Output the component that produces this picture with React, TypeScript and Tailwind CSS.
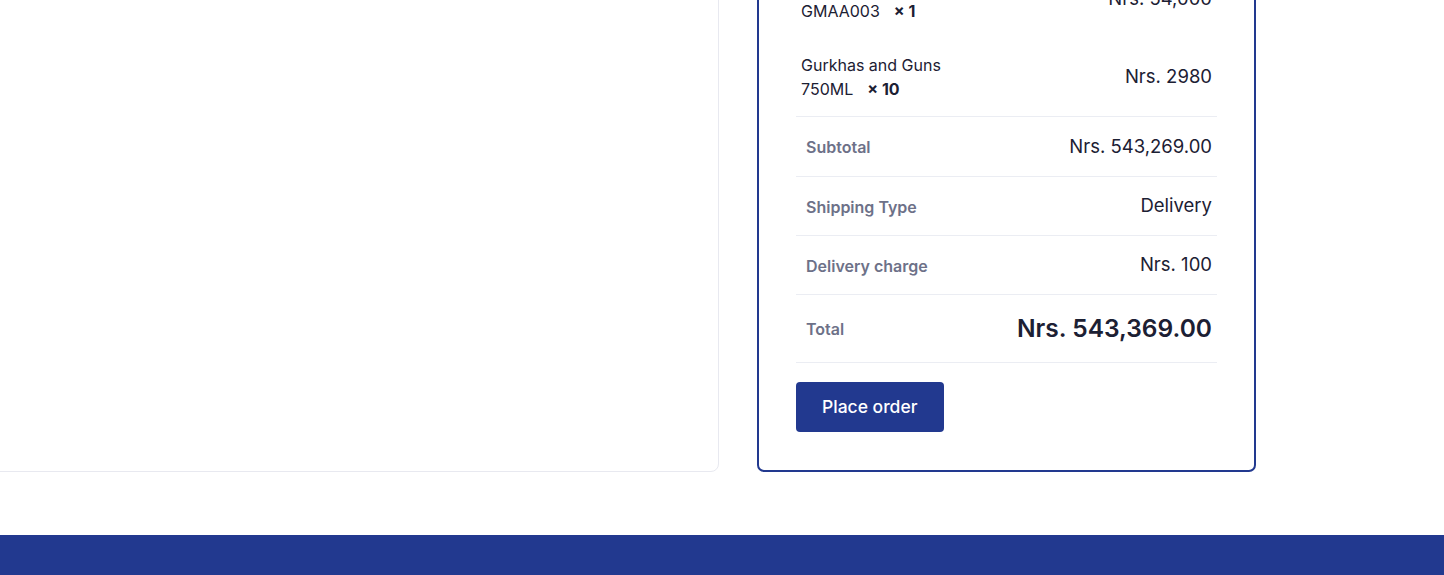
import React from "react";

interface CartItem {
  name: string;
  code: string;
  qty: number;
  price: string;
}

const items: CartItem[] = [
  { name: "Glenmorangie Malt", code: "GMAA003", qty: 1, price: "Nrs. 54,000" },
  { name: "Gurkhas and Guns", code: "750ML", qty: 10, price: "Nrs. 2980" },
];

const font = { fontFamily: "Inter, 'Noto Sans', sans-serif" };

const SummaryRow = ({ label, value, height }: { label: string; value: string; height: string }) => (
  <div className={`flex items-center justify-between border-b border-[#ebedf3] pl-[10px] pr-[5px] ${height}`}>
    <span className="pt-[1px] text-[16px] font-semibold text-[#6d7188]">{label}</span>
    <span className="text-[18.5px] text-[#1c2033]">{value}</span>
  </div>
);

export default function App() {
  return (
    <div className="min-h-screen overflow-hidden bg-white" style={font}>
      <div className="-mt-[79px] flex gap-[38px]">
        {/* left panel (shipping details, scrolled out of view) */}
        <div className="-ml-[40px] w-[759px] rounded-lg border border-[#e8e9f0] bg-white" />

        {/* order summary */}
        <div className="w-[499px] rounded-[7px] border-2 border-[#22398f] px-[37px] pt-[37px] pb-[38px]">
          <div className="border-b border-[#ebedf3]">
            {items.map((item) => (
              <div key={item.code} className="flex items-center justify-between py-[15px] pl-[5px] pr-[5px]">
                <div className="text-[16px] leading-[24px] text-[#1c2033]">
                  <div>{item.name}</div>
                  <div>
                    {item.code}
                    <span className="ml-[14px] font-bold">× {item.qty}</span>
                  </div>
                </div>
                <span className="text-[18.5px] text-[#1c2033]">{item.price}</span>
              </div>
            ))}
          </div>

          <SummaryRow label="Subtotal" value="Nrs. 543,269.00" height="h-[60px]" />
          <SummaryRow label="Shipping Type" value="Delivery" height="h-[59px]" />
          <SummaryRow label="Delivery charge" value="Nrs. 100" height="h-[59px]" />
          <div className="flex h-[68px] items-center justify-between border-b border-[#ebedf3] pl-[10px] pr-[5px]">
            <span className="pt-[1px] text-[16px] font-semibold text-[#6d7188]">Total</span>
            <span className="text-[24.5px] font-semibold text-[#1c2033]">Nrs. 543,369.00</span>
          </div>

          <button className="mt-[19px] h-[50px] rounded-[4px] bg-[#22398f] px-[26px] text-[17.5px] font-medium text-white">
            Place order
          </button>
        </div>
      </div>

      <footer className="mt-[63px] h-[200px] bg-[#22398f]" />
    </div>
  );
}
